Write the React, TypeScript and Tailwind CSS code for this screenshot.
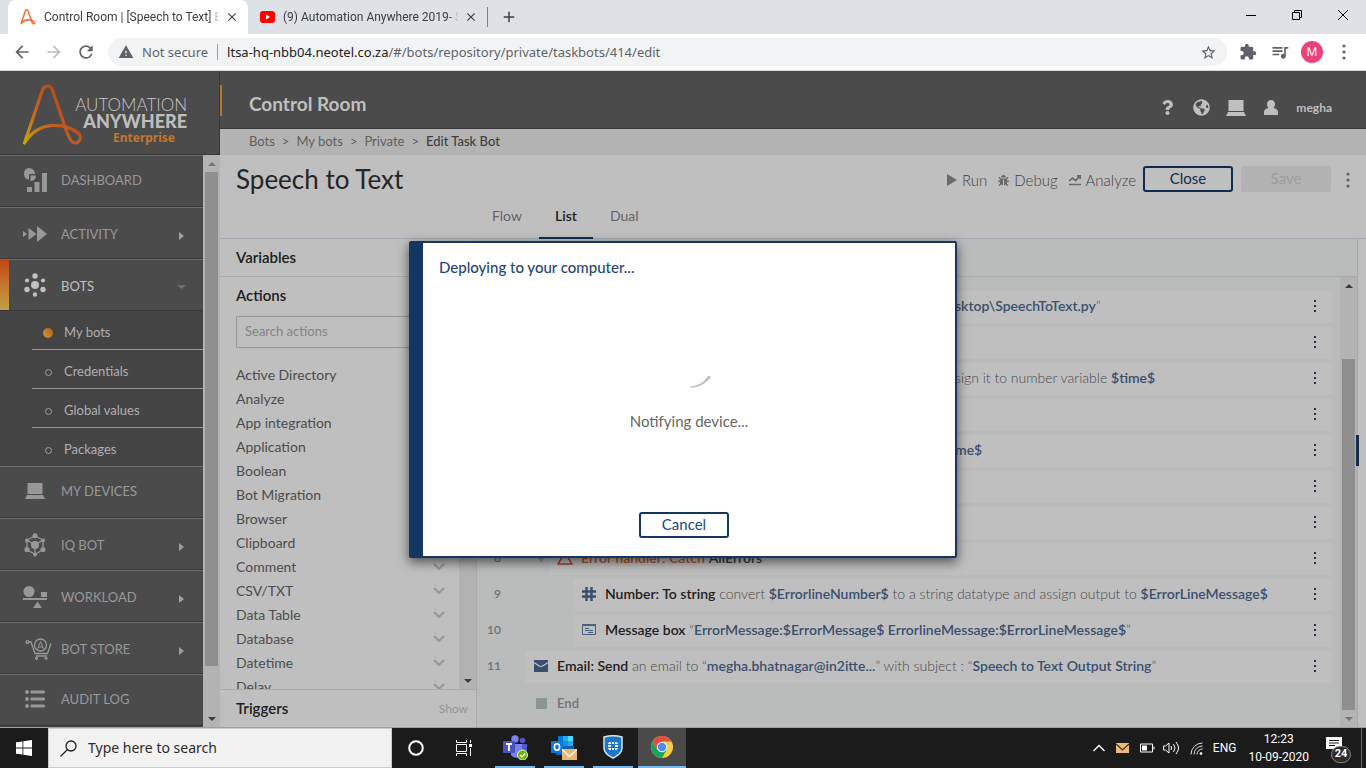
import type { ReactNode } from 'react'
import {
  MdArrowBack,
  MdArrowForward,
  MdClose,
  MdExtension,
  MdOutlineQueueMusic,
  MdRefresh,
  MdStarBorder,
  MdWarning,
  MdAdd,
} from 'react-icons/md'
import { FaBug, FaGlobeAmericas, FaQuestion } from 'react-icons/fa'

interface NavItem {
  label: string
  icon: ReactNode
  expandable?: boolean
}

interface BotLine {
  indent: 1 | 2 | 3
  icon?: ReactNode
  content?: ReactNode
  collapsible?: boolean
}

/* ---------- small drawings ---------- */

function Dots({ className }: { className: string }) {
  return (
    <svg viewBox="0 0 4 14" className={`h-[14px] w-1 fill-current ${className}`}>
      <rect x="1" y="1" width="2" height="2" />
      <rect x="1" y="6" width="2" height="2" />
      <rect x="1" y="11" width="2" height="2" />
    </svg>
  )
}

function RoundDots({ className }: { className: string }) {
  return (
    <svg viewBox="0 0 4 16" className={`h-4 w-1 fill-current ${className}`}>
      <circle cx="2" cy="2" r="1.6" />
      <circle cx="2" cy="8" r="1.6" />
      <circle cx="2" cy="14" r="1.6" />
    </svg>
  )
}

function ScrollArrow({ up, className }: { up?: boolean; className: string }) {
  return (
    <span className="flex h-[17px] shrink-0 items-center justify-center">
      <svg viewBox="0 0 8 4" className={`h-1 w-2 fill-current ${className}`}>
        <path d={up ? 'M0 4 4 0 8 4z' : 'M0 0h8L4 4z'} />
      </svg>
    </span>
  )
}

function LaptopIcon({ className }: { className: string }) {
  return (
    <svg viewBox="0 0 20 16" className={`fill-current ${className}`}>
      <path d="M2.500 0h15v11h-15zM2 12h16l2 4H0z" />
    </svg>
  )
}

function LogoMark() {
  return (
    <svg viewBox="0 0 60 62" className="h-[62px] w-[60px]" fill="none">
      <defs>
        <linearGradient id="logo" x1="0" y1="60" x2="50" y2="20" gradientUnits="userSpaceOnUse">
          <stop offset="0" stopColor="#c9a60c" />
          <stop offset=".45" stopColor="#c4661f" />
          <stop offset="1" stopColor="#bb431d" />
        </linearGradient>
      </defs>
      <path
        d="M2.500 60 20.500 7C22 2 28.500 1.700 30.200 6.500L44.500 48C46 52 49 60.500 53 60C58 59.500 60 53.500 56.500 50.500C51 45.500 42 42 31 42.300C19 42.700 9 49.500 2.500 60z"
        stroke="url(#logo)"
        strokeWidth="3.200"
        strokeLinejoin="round"
      />
    </svg>
  )
}

const dashboardIcon = (
  <svg viewBox="0 0 24 24" className="h-6 w-6 fill-current">
    <path d="M6 0a6 6 0 0 1 6 6H6v5.500A5.800 5.800 0 0 1 6 0z" />
    <path d="M7.500 7.500H13A5.500 5.500 0 0 1 7.500 13z" />
    <path d="M4 19h5v5H4zM11.500 14h5v10h-5zM19 5h5v19h-5z" />
  </svg>
)

const activityIcon = (
  <svg viewBox="0 0 24 16" className="h-4 w-6 fill-current">
    <path d="M0 5v6l4-3zM5.500 2v12l8-6zM14 0v16l10-8z" />
  </svg>
)

const botsIcon = (
  <svg viewBox="0 0 24 24" className="h-6 w-6 fill-current">
    <circle cx="12" cy="12" r="4" />
    <circle cx="12" cy="3" r="2.700" />
    <circle cx="12" cy="21.500" r="2.200" />
    <circle cx="4" cy="7.500" r="2.100" />
    <circle cx="20" cy="7.500" r="2.100" />
    <circle cx="4" cy="16.500" r="2.700" />
    <circle cx="20" cy="16.500" r="2.700" />
  </svg>
)

const iqBotIcon = (
  <svg viewBox="0 0 24 24" className="h-6 w-6 fill-current">
    <path d="M12 3 20 7v9.500l-8 5-8-5V7z" fill="none" stroke="currentColor" strokeWidth="1.200" />
    <path d="M4 7l8 5 8-5M12 12v9" fill="none" stroke="currentColor" strokeWidth="1.200" />
    <circle cx="12" cy="12" r="4" />
    <circle cx="12" cy="2.800" r="2.500" />
    <circle cx="12" cy="21.500" r="2" />
    <circle cx="4" cy="7.500" r="2" />
    <circle cx="20" cy="7.500" r="2" />
    <circle cx="4" cy="16.500" r="2.600" />
    <circle cx="20" cy="16.500" r="2.600" />
  </svg>
)

const workloadIcon = (
  <svg viewBox="0 0 24 22" className="h-[22px] w-6 fill-current">
    <circle cx="6" cy="5.500" r="5.500" />
    <path d="M18 6h6v5h-6zM0 12h24v2H0zM14.500 15.500l4.300 6.500h-8.600z" />
  </svg>
)

const storeIcon = (
  <svg viewBox="0 0 27 22" className="ml-1.5 h-[22px] w-[27px]" fill="none" stroke="currentColor" strokeWidth="1.300">
    <circle cx="2.500" cy="4" r="1.400" />
    <path d="M4 4h2l4 11.500h12.500L26 5.500M11 18h11" />
    <circle cx="15.500" cy="7" r="6" />
    <path d="M12.800 10.500 15.500 3.500l2.700 7c-1-2-3-2.500-5.400 0z" strokeWidth="1" />
    <circle cx="11.500" cy="20.300" r="1" />
    <circle cx="21" cy="20.300" r="1" />
  </svg>
)

const auditIcon = (
  <svg viewBox="0 0 20 18" className="h-[18px] w-5 fill-current">
    <circle cx="2" cy="2" r="1.900" />
    <circle cx="2" cy="9" r="1.900" />
    <circle cx="2" cy="16" r="1.900" />
    <rect x="5.500" y=".5" width="14.500" height="3" rx="1" />
    <rect x="5.500" y="7.500" width="14.500" height="3" rx="1" />
    <rect x="5.500" y="14.500" width="14.500" height="3" rx="1" />
  </svg>
)

const errorIcon = (
  <svg viewBox="0 0 16 14" className="h-[14px] w-4" fill="none" stroke="#a6412c" strokeWidth="1.500">
    <path d="M8 1.500 15 13H1z" strokeLinejoin="round" />
  </svg>
)

const hashIcon = (
  <svg viewBox="0 0 14 14" className="h-[14px] w-[14px]" stroke="#3a4f70" strokeWidth="2.400">
    <path d="M4.500 0v14M9.500 0v14M0 4.500h14M0 9.500h14" />
  </svg>
)

const messageIcon = (
  <svg viewBox="0 0 14 12" className="h-3 w-[14px]" fill="none" stroke="#4c5f7c">
    <path d="M.5 1v9.500h13V1" />
    <path d="M0 1h14" strokeWidth="2" />
    <path d="M3 4.500h4M3 6.500h8M6 8.500h5" />
  </svg>
)

const emailIcon = (
  <svg viewBox="0 0 14 12" className="h-3 w-[14px]">
    <path d="M0 0h14v12H0z" fill="#3a4f70" />
    <path d="M0 2.500C3 4.500 5 6.500 7 6.500s4-2 7-4" fill="none" stroke="#bfbfbf" strokeWidth="1.200" />
  </svg>
)

/* ---------- data ---------- */

const topNav: NavItem[] = [
  { label: 'DASHBOARD', icon: dashboardIcon },
  { label: 'ACTIVITY', icon: activityIcon, expandable: true },
]

const bottomNav: NavItem[] = [
  { label: 'MY DEVICES', icon: <LaptopIcon className="h-4 w-5" /> },
  { label: 'IQ BOT', icon: iqBotIcon, expandable: true },
  { label: 'WORKLOAD', icon: workloadIcon, expandable: true },
  { label: 'BOT STORE', icon: storeIcon, expandable: true },
  { label: 'AUDIT LOG', icon: auditIcon },
]

const botPages = ['My bots', 'Credentials', 'Global values', 'Packages']

const actions = [
  'Active Directory',
  'Analyze',
  'App integration',
  'Application',
  'Boolean',
  'Bot Migration',
  'Browser',
  'Clipboard',
  'Comment',
  'CSV/TXT',
  'Data Table',
  'Database',
  'Datetime',
  'Delay',
]

function Value({ children }: { children: ReactNode }) {
  return <b className="font-semibold text-[#3a4f70]">{children}</b>
}

function Name({ children }: { children: ReactNode }) {
  return <b className="font-semibold text-[#202020]">{children}</b>
}

// Lines 1 to 7 sit behind the dialog, only their tails reach past its edge.
const botLines: BotLine[] = [
  { indent: 1, content: <span className="pl-[398px]"><Value>sktop\SpeechToText.py</Value>”</span> },
  { indent: 1 },
  { indent: 1, content: <span className="pl-[398px]">sign it to number variable <Value>$time$</Value></span> },
  { indent: 1 },
  { indent: 1, content: <span className="pl-[398px]"><Value>me$</Value></span> },
  { indent: 1 },
  { indent: 1 },
  {
    indent: 2,
    icon: errorIcon,
    collapsible: true,
    content: (
      <>
        <b className="font-semibold text-[#b0522f]">Error handler: Catch</b>{' '}
        <b className="font-semibold text-[#3c3c3c]">AllErrors</b>
      </>
    ),
  },
  {
    indent: 3,
    icon: hashIcon,
    content: (
      <>
        <Name>Number: To string</Name> convert <Value>$ErrorlineNumber$</Value> to a string datatype and assign
        output to <Value>$ErrorLineMessage$</Value>
      </>
    ),
  },
  {
    indent: 3,
    icon: messageIcon,
    content: (
      <>
        <Name>Message box</Name> “<Value>ErrorMessage:$ErrorMessage$ ErrorlineMessage:$ErrorLineMessage$</Value>”
      </>
    ),
  },
  {
    indent: 1,
    icon: emailIcon,
    content: (
      <>
        <Name>Email: Send</Name> an email to “<Value>megha.bhatnagar@in2itte...</Value>” with subject : “
        <Value>Speech to Text Output String</Value>”
      </>
    ),
  },
]

const indentWidth = { 1: 'w-6', 2: 'w-12', 3: 'w-18' }

/* ---------- browser ---------- */

function TabStrip() {
  return (
    <div className="flex h-[34px] shrink-0 items-stretch bg-[#dee1e6] pl-2 font-[Roboto,sans-serif] text-xs text-[#3c4043]">
      <div className="flex w-60 items-center rounded-t-lg bg-white pr-2 pl-3">
        <svg viewBox="0 0 60 62" className="h-4 w-4 shrink-0" fill="none" stroke="#f0743a" strokeWidth="6">
          <path d="M3 58 20 7C22 2 28 2 30 7L45 50C47 60 56 60 56 53C52 44 20 32 3 58z" />
        </svg>
        <span className="ml-2 flex-1 overflow-hidden whitespace-nowrap [mask-image:linear-gradient(to_right,black_94%,transparent)]">
          Control Room | [Speech to Text] E
        </span>
        <button aria-label="Close tab" className="ml-1 flex h-4 w-4 items-center justify-center">
          <MdClose size={14} />
        </button>
      </div>
      <div className="flex w-[239px] items-center pr-2 pl-3">
        <svg viewBox="0 0 15 12" className="h-3 w-[15px] shrink-0">
          <rect width="15" height="12" rx="3" fill="#f00" />
          <path d="M6 3.500v5L10 6z" fill="#fff" />
        </svg>
        <span className="ml-2 flex-1 overflow-hidden whitespace-nowrap [mask-image:linear-gradient(to_right,black_94%,transparent)]">
          (9) Automation Anywhere 2019- S
        </span>
        <button aria-label="Close tab" className="ml-1 flex h-4 w-4 items-center justify-center">
          <MdClose size={14} />
        </button>
      </div>
      <span className="h-5 w-px self-center bg-[#808388]" />
      <button aria-label="New tab" className="flex w-[42px] items-center justify-center">
        <MdAdd size={18} />
      </button>
      <div className="ml-auto flex pb-1 text-black">
        <button aria-label="Minimize" className="flex w-[46px] items-center justify-center">
          <svg viewBox="0 0 10 10" className="h-[10px] w-[10px]" stroke="currentColor">
            <path d="M0 5.500h10" />
          </svg>
        </button>
        <button aria-label="Restore" className="flex w-[46px] items-center justify-center">
          <svg viewBox="0 0 10 10" className="h-[10px] w-[10px]" fill="none" stroke="currentColor">
            <path d="M.5 2.500h7v7h-7zM2.500 2.500v-2h7v7h-2" />
          </svg>
        </button>
        <button aria-label="Close" className="flex w-[46px] items-center justify-center">
          <svg viewBox="0 0 10 10" className="h-[10px] w-[10px]" stroke="currentColor">
            <path d="M0 0l10 10M10 0 0 10" />
          </svg>
        </button>
      </div>
    </div>
  )
}

function AddressBar() {
  return (
    <div className="flex h-[37px] shrink-0 items-center border-b border-[#d5d7da] bg-white px-3 text-[#5f6368]">
      <div className="flex w-24 shrink-0 gap-3">
        <button aria-label="Back"><MdArrowBack size={20} /></button>
        <button aria-label="Forward" className="text-[#bbbdc0]"><MdArrowForward size={20} /></button>
        <button aria-label="Reload"><MdRefresh size={20} /></button>
      </div>
      <div className="flex h-7 flex-1 items-center rounded-full bg-[#f1f3f4] px-[10px] text-[13px]">
        <MdWarning size={16} />
        <span className="ml-2 pt-px">Not secure</span>
        <span className="mx-[9px] h-4 w-px bg-[#9aa0a6]" />
        <a href="#" className="flex-1 pt-px whitespace-nowrap">
          <span className="text-[#202124]">ltsa-hq-nbb04.neotel.co.za</span>/#/bots/repository/private/taskbots/414/edit
        </a>
        <button aria-label="Bookmark"><MdStarBorder size={17} /></button>
      </div>
      <div className="ml-3 flex items-center gap-[11px]">
        <button aria-label="Extensions" className="mr-0.5"><MdExtension size={18} /></button>
        <button aria-label="Media controls"><MdOutlineQueueMusic size={20} /></button>
        <button className="h-[22px] w-[22px] rounded-full bg-[#ec407a] text-xs text-white">M</button>
        <button aria-label="Chrome menu" className="mr-2 ml-2"><RoundDots className="text-[#5f6368]" /></button>
      </div>
    </div>
  )
}

/* ---------- control room ---------- */

function NavRow({ item }: { item: NavItem }) {
  return (
    <a
      href="#"
      className={`flex h-[52px] shrink-0 items-center border-t border-b border-t-[#6d6d6d] border-b-[#383838] text-[13px] text-[#989898] ${
        item.expandable ? 'pt-0.5' : 'pb-0.5'
      }`}
    >
      <span className="flex w-[70px] shrink-0 justify-center">{item.icon}</span>
      <span className="-ml-[9px] flex-1 pt-0.5">{item.label}</span>
      {item.expandable && (
        <svg viewBox="0 0 5 8" className="mt-1 mr-[19px] h-2 w-[5px] fill-[#a0a0a0]">
          <path d="M0 0l5 4-5 4z" />
        </svg>
      )}
    </a>
  )
}

function Sidebar() {
  return (
    <aside className="flex w-[220px] shrink-0 flex-col">
      <div className="flex h-[84px] shrink-0 items-start border-r border-b border-[#383838] bg-[#4b4b4b] pt-3 pl-[22px]">
        <LogoMark />
        <div className="-ml-2 flex w-[113px] flex-col items-end pt-[14px] leading-4 whitespace-nowrap">
          <span className="text-[17px] font-light text-[#c4c4c4]">AUTOMATION</span>
          <span className="text-lg leading-4 font-black text-[#bdbdbd]">ANYWHERE</span>
          <span className="mr-3 font-['Noto_Sans',sans-serif] text-xs leading-[18px] font-bold text-[#c4762c]">
            Enterprise
          </span>
        </div>
      </div>
      <div className="flex min-h-0 flex-1">
        <nav className="flex flex-1 flex-col overflow-hidden bg-[#4b4b4b]">
          {topNav.map((item) => (
            <NavRow key={item.label} item={item} />
          ))}
          <a href="#" className="flex h-[51px] shrink-0 items-center border-t border-[#6d6d6d] text-[13px] text-[#c0c0c0]">
            <span className="h-full w-[9px] bg-linear-to-b from-[#c1440e] to-[#bfa24a]" />
            <span className="ml-[14px] w-[38px]">{botsIcon}</span>
            <span className="flex-1 pt-1">BOTS</span>
            <svg viewBox="0 0 9 4" className="mt-1 mr-[17px] h-1 w-[9px] fill-[#707070]">
              <path d="M0 0h9L4.500 4z" />
            </svg>
          </a>
          <ul className="shrink-0 border-t border-[#383838] bg-[#444] pl-8 text-[13px] text-[#b0b0b0]">
            {botPages.map((page, i) => (
              <li key={page} className={i < 3 ? 'h-[39px] border-b border-[#999]' : 'h-[38px]'}>
                <a href="#" className="flex h-full items-center pt-1.5">
                  <span className="flex w-8 items-center justify-center">
                    {i === 0 ? (
                      <span className="h-[10px] w-[10px] rounded-full bg-linear-to-tr from-[#c59a35] to-[#bf5a18]" />
                    ) : (
                      <span className="h-[7px] w-[7px] rounded-full border border-[#a0a0a0]" />
                    )}
                  </span>
                  {page}
                </a>
              </li>
            ))}
          </ul>
          {bottomNav.map((item) => (
            <NavRow key={item.label} item={item} />
          ))}
        </nav>
        <div className="flex w-[17px] flex-col bg-[#b3b3b3]">
          <ScrollArrow up className="text-[#747474]" />
          <span className="mx-0.5 grow-[495] basis-0 bg-[#8f8f8f]" />
          <span className="grow-[44] basis-0" />
          <ScrollArrow className="text-[#3c3c3c]" />
        </div>
      </div>
    </aside>
  )
}

function AppHeader() {
  return (
    <header className="flex h-[58px] shrink-0 items-end border-b border-[#383838] bg-[#4b4b4b] text-[#bfbfbf]">
      <span className="mb-3 h-[31px] w-[2px] bg-[#bd7430]" />
      <h1 className="mb-3 ml-[27px] text-[19px] leading-6 font-bold">Control Room</h1>
      <div className="mb-3 ml-auto flex items-center gap-[14px] pr-[34px] text-xs leading-4 font-bold">
        <a href="#" aria-label="Help" className="mr-1"><FaQuestion size={15} /></a>
        <a href="#" aria-label="Language"><FaGlobeAmericas size={17} /></a>
        <a href="#" aria-label="Devices" className="mr-1 ml-0.5"><LaptopIcon className="h-4 w-5" /></a>
        <a href="#" className="flex items-center gap-[18px]">
          <svg viewBox="0 0 14 15" className="h-[15px] w-[14px] fill-current">
            <path d="M7 0c2.500 0 4 1.800 4 4 0 1.500-.6 3-1.500 4 2.500.6 4.500 1.500 4.500 4v3H0v-3c0-2.500 2-3.400 4.500-4C3.600 7 3 5.500 3 4c0-2.200 1.500-4 4-4z" />
          </svg>
          megha
        </a>
      </div>
    </header>
  )
}

function ActionsPanel() {
  return (
    <div className="flex w-[257px] shrink-0 flex-col border-r border-[#a7a9ad] text-sm text-[#4d4d4d]">
      <h3 className="h-[38px] shrink-0 border-b border-[#a9abac] pl-4 text-[15px] leading-[37px] font-semibold text-[#202020]">
        Variables
      </h3>
      <div className="flex min-h-0 flex-1">
        <div className="flex flex-1 flex-col overflow-hidden pl-4">
          <h3 className="h-[39px] shrink-0 text-[15px] leading-[37px] font-semibold text-[#202020]">Actions</h3>
          <input
            aria-label="Search actions"
            placeholder="Search actions"
            className="mr-4 h-8 shrink-0 rounded-xs border border-[#999] bg-transparent px-2 pb-0.5 text-[13px] placeholder:text-[#858585]"
          />
          <ul className="pt-[15px]">
            {actions.map((action) => (
              <li key={action}>
                <button className="flex h-6 w-full items-center justify-between pr-[14px]">
                  {action}
                  <svg viewBox="0 0 12 8" className="h-2 w-3" fill="none" stroke="#8f9799" strokeWidth="1.800">
                    <path d="M1 1l5 5 5-5" />
                  </svg>
                </button>
              </li>
            ))}
          </ul>
        </div>
        <div className="flex w-[17px] flex-col justify-between bg-[#b3b3b3]">
          <ScrollArrow up className="text-[#747474]" />
          <ScrollArrow className="text-[#3c3c3c]" />
        </div>
      </div>
      <h3 className="flex h-[38px] shrink-0 items-center justify-between border-t border-[#a9abac] pr-2 pl-4 text-[15px] font-semibold text-[#202020]">
        Triggers
        <button className="text-xs font-normal text-[#8f9799]">Show</button>
      </h3>
    </div>
  )
}

function BotList() {
  return (
    <div className="flex min-w-0 flex-1 flex-col border-r border-[#a7a9ad] bg-[#b9bcbb]">
      <div className="h-[38px] shrink-0 border-b border-[#a7a9b3]" />
      <div className="flex min-h-0 flex-1">
        <ol className="flex min-w-0 flex-1 flex-col gap-1 overflow-hidden pt-[14px] pr-2 text-sm font-light text-[#4a4a4a]">
          {botLines.map((line, i) => (
            <li key={i} className="flex h-8 shrink-0 items-center">
              <span className="w-6 shrink-0 pb-0.5 text-right text-xs font-semibold text-[#6c7579]">
                {i > 6 && i + 1}
              </span>
              <span className={`flex shrink-0 justify-end pr-1 ${indentWidth[line.indent]}`}>
                {line.collapsible && (
                  <svg viewBox="0 0 8 5" className="h-[5px] w-2 fill-[#8f9799]">
                    <path d="M0 0h8L4 5z" />
                  </svg>
                )}
              </span>
              <div className="flex h-8 min-w-0 flex-1 items-center rounded-xs bg-[#bfbfbf] pr-[15px] pb-0.5">
                <span className="flex w-8 shrink-0 justify-center">{line.icon}</span>
                <div className="flex-1 whitespace-nowrap">{line.content}</div>
                <button aria-label="Line menu"><Dots className="text-[#28334c]" /></button>
              </div>
            </li>
          ))}
          <li className="flex h-8 shrink-0 items-center pl-12 text-[13px] font-semibold text-[#6c7579]">
            <span className="flex w-8 justify-center">
              <span className="h-[11px] w-[11px] bg-[#8b9597]" />
            </span>
            End
          </li>
        </ol>
        <div className="flex w-[17px] shrink-0 flex-col bg-[#b3b3b3]">
          <ScrollArrow up className="text-[#3c3c3c]" />
          <span className="grow-[65] basis-0" />
          <span className="mx-0.5 grow-[351] basis-0 bg-[#8f8f8f]" />
          <ScrollArrow className="text-[#747474]" />
        </div>
      </div>
    </div>
  )
}

function Editor() {
  return (
    <main className="flex min-w-0 flex-1 flex-col bg-[#bfbfbf]">
      <AppHeader />
      <nav className="flex h-[26px] shrink-0 items-center gap-[7px] bg-[#b3b3b3] pl-[29px] text-[13px] text-[#606060]">
        <a href="#">Bots</a> &gt; <a href="#">My bots</a> &gt; <a href="#">Private</a> &gt;
        <span className="font-medium text-[#404040]">Edit Task Bot</span>
      </nav>
      <div className="flex h-[50px] shrink-0 items-center pr-4 pl-4">
        <h2 className="flex-1 pb-0.5 text-[26px] leading-8 text-[#252525]">Speech to Text</h2>
        <div className="flex gap-[11px] text-[15px] font-light text-[#444]">
          <button className="flex items-center gap-[5px]">
            <svg viewBox="0 0 10 12" className="h-3 w-[10px] fill-[#6a6a6a]"><path d="M0 0l10 6-10 6z" /></svg>
            Run
          </button>
          <button className="flex items-center gap-[5px]"><FaBug size={11} color="#6a6a6a" />Debug</button>
          <button className="flex items-center gap-[5px]">
            <svg viewBox="0 0 12 11" className="h-[11px] w-3" fill="none" stroke="#6a6a6a" strokeWidth="1.700">
              <path d="M0 6l3.500-3 3 2.500L11 1M8 .8h3.200V4M0 9.500h12" />
            </svg>
            Analyze
          </button>
        </div>
        <button className="mb-0.5 ml-[7px] h-[26px] w-[90px] rounded-[3px] border-2 border-[#0f2b4e] pb-0.5 text-[15px] leading-none text-[#0f2b4e]">
          Close
        </button>
        <button disabled className="mb-0.5 ml-2 h-[26px] w-[90px] rounded-[3px] bg-[#b2b2b2] pb-0.5 text-[15px] leading-none text-[#9d9d9d]">
          Save
        </button>
        <button aria-label="More" className="ml-[15px]"><RoundDots className="text-[#626262]" /></button>
      </div>
      <div role="tablist" className="flex h-[34px] shrink-0 items-stretch gap-px border-b border-[#a7abb3] pl-64 text-sm text-[#646464]">
        <button role="tab" className="px-4 pb-3">Flow</button>
        <button role="tab" aria-selected className="-mb-px border-b-2 border-[#0f2b4e] px-4 pb-[10px] font-semibold text-[#202020]">
          List
        </button>
        <button role="tab" className="px-4 pb-3">Dual</button>
      </div>
      <div className="flex min-h-0 flex-1">
        <ActionsPanel />
        <BotList />
        <div className="flex w-2 items-center">
          <button aria-label="Expand details" className="mb-[66px] -ml-0.5 h-[31px] w-[3px] bg-[#0f2b4e]" />
        </div>
      </div>
    </main>
  )
}

function DeployDialog() {
  return (
    <div className="absolute inset-0 flex items-center justify-center">
      <div
        role="dialog"
        aria-labelledby="deploy-title"
        className="flex h-[317px] w-[548px] flex-col rounded-xs border-2 border-l-14 border-[#143761] bg-white text-[15px] text-[#26476f] shadow-[0_4px_12px_rgba(0,0,0,0.6)]"
      >
        <h2 id="deploy-title" className="px-4 pt-3 leading-6 font-medium">
          Deploying to your computer...
        </h2>
        <div className="flex flex-1 flex-col items-center gap-4 pt-[70px]">
          <svg viewBox="0 0 44 44" className="h-11 w-11">
            <path d="M23 37.500C31 37 37 33 41 27.200a1.500 1.500 0 0 1 2.300 1.800C38 35 32 38.800 23 38.600z" fill="#bdbdbd" />
          </svg>
          <p className="leading-6 text-[#666]">Notifying device...</p>
        </div>
        <div className="flex justify-center pr-[10px] pb-[18px]">
          <button className="h-[26px] w-[90px] rounded-[3px] border-2 border-[#143761] leading-none">
            Cancel
          </button>
        </div>
      </div>
    </div>
  )
}

/* ---------- taskbar ---------- */

function TaskButton({ label, open, active, children }: { label: string; open?: boolean; active?: boolean; children: ReactNode }) {
  return (
    <button
      aria-label={label}
      className={`flex h-full w-12 flex-col items-center ${active ? 'bg-[#4a4a4a]' : ''}`}
    >
      <span className="flex flex-1 items-center">{children}</span>
      {open && <span className={`h-0.5 bg-[#76b9ed] ${active ? 'w-12' : 'w-10'}`} />}
    </button>
  )
}

function Taskbar() {
  return (
    <footer className="flex h-10 shrink-0 items-center bg-[#1b1b1b] text-white">
      <TaskButton label="Start">
        <svg viewBox="0 0 16 16" className="h-4 w-4 fill-white">
          <path d="M0 2.300 6.500 1.400v6.200H0zM7.300 1.300 16 0v7.600H7.300zM0 8.400h6.500v6.200L0 13.700zM7.300 8.400H16V16l-8.700-1.300z" />
        </svg>
      </TaskButton>
      <label className="flex h-10 w-[344px] items-center border border-[#ccc] bg-[#f2f2f2] pl-[11px] text-[#1f1f1f]">
        <svg viewBox="0 0 17 17" className="h-[17px] w-[17px]" fill="none" stroke="#1f1f1f" strokeWidth="1.300">
          <circle cx="11" cy="6" r="5" />
          <path d="M7.500 9.500.5 16.500" />
        </svg>
        <input
          aria-label="Search Windows"
          placeholder="Type here to search"
          className="ml-[11px] flex-1 bg-transparent text-sm placeholder:text-[#2b2b2b]"
        />
      </label>
      <TaskButton label="Cortana">
        <svg viewBox="0 0 16 16" className="h-4 w-4" fill="none" stroke="#fff" strokeWidth="2">
          <circle cx="8" cy="8" r="6.800" />
        </svg>
      </TaskButton>
      <TaskButton label="Task view">
        <svg viewBox="0 0 16 16" className="h-4 w-4" fill="none" stroke="#fff">
          <path d="M.5 0v2.500h10V0M.5 16v-2.500h10V16M.5 4.500h10v7H.5zM14.500 0v3M14.500 8v8" />
          <path d="M13 4h3v3h-3z" fill="#fff" stroke="none" />
        </svg>
      </TaskButton>
      <div className="ml-[3px] flex h-full gap-px">
        <TaskButton label="Teams" open>
          <svg viewBox="0 0 26 26" className="h-[26px] w-[26px]">
            <circle cx="20.500" cy="6.500" r="2.700" fill="#5059c9" />
            <path d="M17 10h8v7a5 5 0 0 1-8 3z" fill="#5059c9" />
            <circle cx="13" cy="5" r="3.700" fill="#7b83eb" />
            <path d="M9 10h11v8a6 6 0 0 1-11 3z" fill="#7b83eb" />
            <rect x="1" y="7" width="12" height="12" rx="1" fill="#4b53bc" />
            <path d="M4 10h6M7 10v7" stroke="#fff" strokeWidth="1.800" />
            <circle cx="20.500" cy="21" r="5" fill="#6bb700" stroke="#e8f2dc" />
            <path d="M18 21l2 2 3.200-3.500" fill="none" stroke="#fff" strokeWidth="1.400" />
          </svg>
        </TaskButton>
        <TaskButton label="Outlook" open>
          <svg viewBox="0 0 26 26" className="h-[26px] w-[26px]">
            <path d="M7 2h15v10H7z" fill="#0078d4" />
            <path d="M12 2h5v5h-5z" fill="#28a8ea" />
            <path d="M17 2h5v5h-5z" fill="#50d9ff" />
            <path d="M12 7h5v5h-5z" fill="#1490df" />
            <path d="M17 7h5v5h-5z" fill="#28a8ea" />
            <path d="M5 12h18v9H5z" fill="#0a64ad" />
            <rect y="7" width="12" height="12" rx="1" fill="#0f78d4" />
            <ellipse cx="6" cy="13" rx="2.600" ry="3.200" fill="none" stroke="#fff" strokeWidth="1.600" />
            <path d="M11 15h15v11H11z" fill="#efb56f" />
            <path d="M11 15.500l7.500 7 7.500-7" fill="none" stroke="#fff" strokeWidth="1.400" />
          </svg>
        </TaskButton>
        <TaskButton label="FortiClient" open>
          <svg viewBox="0 0 20 24" className="h-6 w-5">
            <path d="M1 2Q10-.5 19 2v11c0 5-4.500 8-9 10.200C5.500 21 1 18 1 13z" fill="#1a78c8" stroke="#d5e6f3" strokeWidth="1.500" />
            <path d="M6.500 7H8v2H5V8.500zM9 7h2v2H9zM12 7h1.500L15 8.500V9h-3zM5 10h3v2H5zM12 10h3v2h-3zM5 13h3v2H6.500L5 13.500zM9 13h2v2H9zM12 13h3v.5L13.500 15H12z" fill="#fff" />
          </svg>
        </TaskButton>
        <TaskButton label="Chrome" open active>
          <svg viewBox="0 0 24 24" className="h-6 w-6">
            <circle cx="12" cy="12" r="11" fill="#ffcd40" />
            <path d="M2.500 6.500A11 11 0 0 1 21.500 6.500H12L7.200 14.700z" fill="#dd4f43" />
            <path d="M2.500 6.500A11 11 0 0 0 12 23l4.800-8.300L7.200 14.700z" fill="#1aa15f" />
            <circle cx="12" cy="12" r="5.200" fill="#f1f1f1" />
            <circle cx="12" cy="12" r="4.200" fill="#4d8bf5" />
          </svg>
        </TaskButton>
      </div>
      <div className="ml-auto flex h-full items-center font-[Roboto,sans-serif] text-xs">
        <svg viewBox="0 0 12 8" className="mr-[11px] h-2 w-3" fill="none" stroke="#fff" strokeWidth="1.300">
          <path d="M.5 7 6 1.500 11.500 7" />
        </svg>
        <svg viewBox="0 0 13 10" className="mr-[11px] h-[10px] w-[13px]">
          <path d="M0 0h13v10H0z" fill="#eebb74" />
          <path d="M0 1l6.500 6L13 1" fill="none" stroke="#3a2d1b" strokeWidth="1.200" />
        </svg>
        <svg viewBox="0 0 15 10" className="mr-2 h-[10px] w-[15px]" fill="none" stroke="#fff">
          <path d="M.5 1h12v8H.5zM14 3.500v3" />
          <path d="M2 2.500h5v5H2z" fill="#fff" stroke="none" />
        </svg>
        <svg viewBox="0 0 17 14" className="mr-[10px] h-[14px] w-[17px]" fill="none" stroke="#fff">
          <path d="M.5 5h2L6 2v10L2.500 9h-2zM8 5q1.500 2 0 4M10.500 3q3 4 0 8M13 1q5 6 0 12" />
        </svg>
        <svg viewBox="0 0 13 13" className="mr-[10px] h-[13px] w-[13px]" fill="none" stroke="#e0e0e0">
          <path d="M1 12.500A11.500 11.500 0 0 1 12.500 1M4 12.500A8.500 8.500 0 0 1 12.500 4M7 12.500A5.500 5.500 0 0 1 12.500 7" />
          <circle cx="11" cy="11.500" r="1" fill="#fff" />
        </svg>
        ENG
        <div className="mr-[13px] ml-3 text-center leading-[18px]">
          <div>12:23</div>
          <div>10-09-2020</div>
        </div>
        <button aria-label="Notifications" className="relative mr-[7px] ml-1 h-[26px] w-7">
          <svg viewBox="0 0 16 14" className="mb-2 h-[14px] w-4">
            <path d="M0 0h16v12h-4v2l-3-2H0z" fill="#fff" />
            <path d="M3 3.500h10M3 6h10M3 8.500h6" stroke="#1b1b1b" />
          </svg>
          <span className="absolute top-[11px] left-[5px] flex h-[17px] w-[20px] items-center justify-center rounded-full border border-[#8a8a8a] bg-[#2b2b2b] text-[11px] font-bold">
            24
          </span>
        </button>
        <span className="mr-1 h-full w-px bg-[#6b6b6b]" />
      </div>
    </footer>
  )
}

export default function App() {
  return (
    <div className="flex h-screen flex-col overflow-hidden font-['Noto_Sans',sans-serif]">
      <TabStrip />
      <AddressBar />
      <div className="relative flex min-h-0 flex-1 border-b border-[#a0a0a0] font-[Lato,sans-serif]">
        <Sidebar />
        <Editor />
        <DeployDialog />
      </div>
      <Taskbar />
    </div>
  )
}
